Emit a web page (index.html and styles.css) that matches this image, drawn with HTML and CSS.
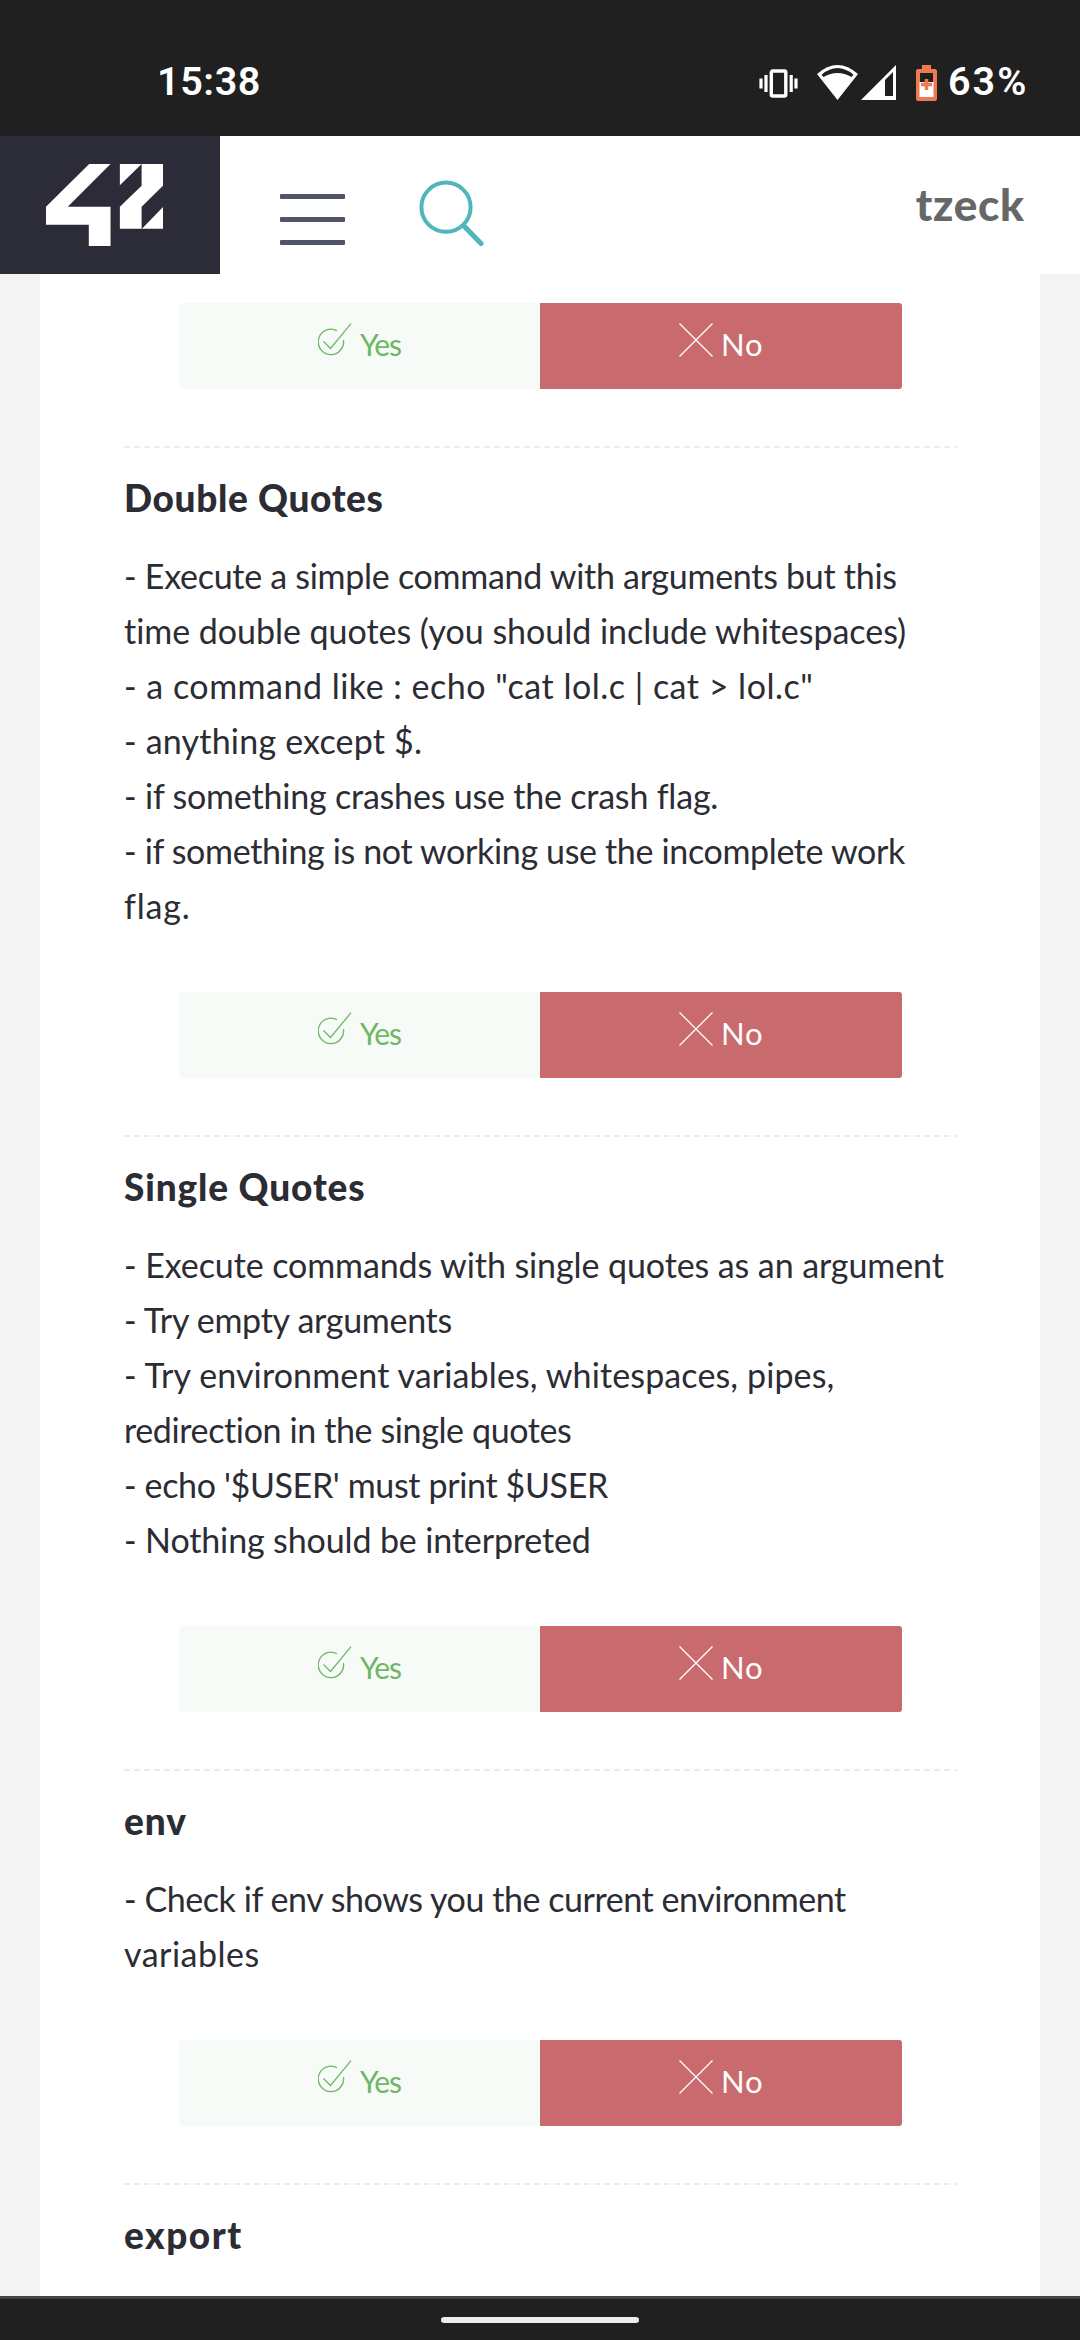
FILE: index.html
```
<!DOCTYPE html>
<html lang="en">
<head>
<meta charset="utf-8">
<title>Evaluation</title>
<link rel="stylesheet" href="styles.css">
</head>
<body>
<svg class="defs" aria-hidden="true">
  <symbol id="yes" viewBox="0 0 34 34"><path d="M19 7.700A12.700 12.700 0 1 0 25.500 17M5.500 18.500l7 7L33 .7" fill="none" stroke="currentColor" stroke-width="1.3"/></symbol>
  <symbol id="no" viewBox="0 0 34 34"><path d="M.5.5l33 33M33.500.5l-33 33" fill="none" stroke="currentColor" stroke-width="1.3"/></symbol>
</svg>
<div class="screen">
  <div class="status">
    <span class="clock">15:38</span>
    <div class="status-icons">
      <svg class="vibrate" viewBox="0 0 39 29" width="39" height="29"><rect x="12.300" y="2" width="14.500" height="25" rx="1.500" fill="none" stroke="#fff" stroke-width="3.400"/><path d="M2 9.500v10M7 6v17M32.200 6v17M37 9.500v10" stroke="#fff" stroke-width="3.200"/></svg>
      <svg class="wifi" viewBox="0 0 41 35" width="41" height="35"><path d="M0 9Q20.500-9 41 9L20.500 35z" fill="#fff"/><path d="M4.500 9.700Q20.500-3.500 36.500 9.700L34.500 12Q20.500 4 6.500 12z" fill="#202020"/></svg>
      <svg class="signal" viewBox="0 0 35 35" width="35" height="35"><path d="M0 35L35 0v35z" fill="#fff"/><path d="M24 15l8-8v24h-8z" fill="#202020"/></svg>
      <svg class="battery" viewBox="0 0 21 36" width="21" height="36"><path d="M6 0h9v4h4.500L21 5.500V34.500L19.500 36h-18L0 34.500V5.500L1.500 4H6z" fill="#ef7950"/><path d="M4 8h13v9H4z" fill="#202020"/><path d="M3.500 17h14v15h-14z" fill="#fff"/><path d="M5 19.500h11M10.500 14v11" stroke="#ef7950" stroke-width="3.500"/></svg>
    </div>
    <span class="percent">63%</span>
  </div>
  <header class="topbar">
    <div class="logo"><svg viewBox="0 0 339 246" preserveAspectRatio="none" width="117" height="82" fill="#fff"><path d="M0 128L125 0h62L63 128h124v118h-63v-64H0z"/><path d="M214 0h63l-63 64zM277 0h62v65l-62 63v66h-63v-66l63-63zM339 129v65h-61z"/></svg></div>
    <div class="menu"><i></i><i></i><i></i></div>
    <svg class="search" viewBox="0 0 67 67" width="67" height="67" fill="none" stroke="#4fb7ba"><circle cx="27" cy="27.200" r="24.600" stroke-width="4"/><path d="M45 46L62 63.500" stroke-width="5.200" stroke-linecap="round"/></svg>
    <span class="user">tzeck</span>
  </header>
  <main class="page">
    <div class="card">
      <div class="choice"><div class="yes"><svg><use href="#yes"/></svg><span>Yes</span></div><div class="no"><svg><use href="#no"/></svg><span>No</span></div></div>
      <section>
        <h2 class="h-double">Double Quotes</h2>
        <p><span class="d1">- Execute a simple command with arguments but this</span><span class="d2">time double quotes (you should include whitespaces)</span><span class="d3">- a command like : echo "cat lol.c | cat &gt; lol.c"</span><span class="d4">- anything except $.</span><span class="d5">- if something crashes use the crash flag.</span><span class="d6">- if something is not working use the incomplete work</span><span class="d7">flag.</span></p>
        <div class="choice"><div class="yes"><svg><use href="#yes"/></svg><span>Yes</span></div><div class="no"><svg><use href="#no"/></svg><span>No</span></div></div>
      </section>
      <section>
        <h2 class="h-single">Single Quotes</h2>
        <p><span class="s1">- Execute commands with single quotes as an argument</span><span class="s2">- Try empty arguments</span><span class="s3">- Try environment variables, whitespaces, pipes,</span><span class="s4">redirection in the single quotes</span><span class="s5">- echo '$USER' must print $USER</span><span class="s6">- Nothing should be interpreted</span></p>
        <div class="choice"><div class="yes"><svg><use href="#yes"/></svg><span>Yes</span></div><div class="no"><svg><use href="#no"/></svg><span>No</span></div></div>
      </section>
      <section>
        <h2 class="h-env">env</h2>
        <p><span class="e1">- Check if env shows you the current environment</span><span class="e2">variables</span></p>
        <div class="choice"><div class="yes"><svg><use href="#yes"/></svg><span>Yes</span></div><div class="no"><svg><use href="#no"/></svg><span>No</span></div></div>
      </section>
      <section>
        <h2 class="h-export">export</h2>
      </section>
    </div>
  </main>
  <footer class="gesture"><i></i></footer>
</div>
</body>
</html>
```

FILE: styles.css
```
* { box-sizing: border-box; }
body { margin: 0; font-family: Lato, "Liberation Sans", sans-serif; color: #2c2c34; }
.defs { display: none; }
.screen { width: 1080px; height: 2340px; display: flex; flex-direction: column; overflow: hidden; }

.status { height: 136px; flex: none; background: #202020; color: #fff; display: flex; padding: 0 53px 0 157px; font: 600 39.5px/109px Roboto, sans-serif; }
.clock { padding-top: 27px; letter-spacing: .6px; }
.status-icons { display: flex; align-items: flex-start; margin-left: auto; padding-top: 65px; }
.vibrate { margin-top: 4px; }
.wifi { margin-left: 19px; }
.signal { margin-left: 3px; }
.battery { margin-left: 20px; }
.percent { padding-top: 27px; width: 79px; margin-left: 11px; letter-spacing: 2px; white-space: nowrap; }

.topbar { height: 138px; flex: none; display: flex; align-items: flex-start; background: #fff; padding-right: 56px; }
.logo { width: 220px; height: 138px; background: #2b2c38; padding: 28px 0 0 46px; }
.menu { width: 65px; margin: 58px 0 0 60px; display: flex; flex-direction: column; gap: 18px; }
.menu i { height: 5px; background: #4f5566; border-radius: 1px; }
.search { margin: 44px 0 0 74px; }
.user { margin-left: auto; padding-top: 43px; font-size: 44px; line-height: 50px; font-weight: 900; letter-spacing: .7px; margin-right: -.7px; color: #676767; }

.page { flex: 1; min-height: 0; overflow: hidden; background: #f4f4f4; padding: 0 40px; }
.card { background: #fff; height: 100%; padding: 29px 83px 0 84px; }
section { padding-top: 27px; background: repeating-linear-gradient(90deg, #ececec 0 6px, transparent 6px 10px) top / 100% 2px no-repeat; }
h2 { margin: 0; font-size: 37px; line-height: 47px; padding-top: 1px; font-weight: 900; }
p { margin: 27px 0 59px; font-size: 34px; line-height: 55px; white-space: nowrap; }
p span { display: block; }

.choice { width: 723px; height: 86px; margin: 0 0 57px 55px; display: flex; border-radius: 3px; overflow: hidden; font-size: 30px; line-height: 82px; }
.choice > div { display: flex; padding-left: 139px; }
.choice svg { width: 34px; height: 34px; margin-top: 20px; flex: none; }
.yes { width: 361px; background: #f6fbf8; color: #6fb765; }
.yes span { margin-left: 8px; letter-spacing: -1.2px; }
.no { width: 362px; background: #c96a6f; color: #fff; }
.no span { margin-left: 8px; font-size: 31px; letter-spacing: .8px; }

/* tracking per heading and line */
.h-double { letter-spacing: .65px; }
.h-single { letter-spacing: .85px; }
.h-env { letter-spacing: .9px; }
.h-export { letter-spacing: 1.5px; }
.d1 { letter-spacing: -.28px; }
.d2 { letter-spacing: -.03px; }
.d3 { letter-spacing: .5px; }
.d4 { letter-spacing: .2px; }
.d5 { letter-spacing: -.2px; }
.d6 { letter-spacing: -.35px; }
.d7 { letter-spacing: .8px; }
.s1 { letter-spacing: -.09px; }
.s2 { letter-spacing: -.28px; }
.s3 { letter-spacing: .12px; }
.s4 { letter-spacing: -.38px; }
.s5 { letter-spacing: -.36px; }
.s6 { letter-spacing: -.13px; }
.e1 { letter-spacing: -.44px; }
.e2 { letter-spacing: .5px; }

.gesture { height: 44px; flex: none; background: #202020; border-top: 3px solid #444; display: flex; justify-content: center; padding-top: 18px; }
.gesture i { width: 198px; height: 6px; border-radius: 3px; background: #ececec; }
```
